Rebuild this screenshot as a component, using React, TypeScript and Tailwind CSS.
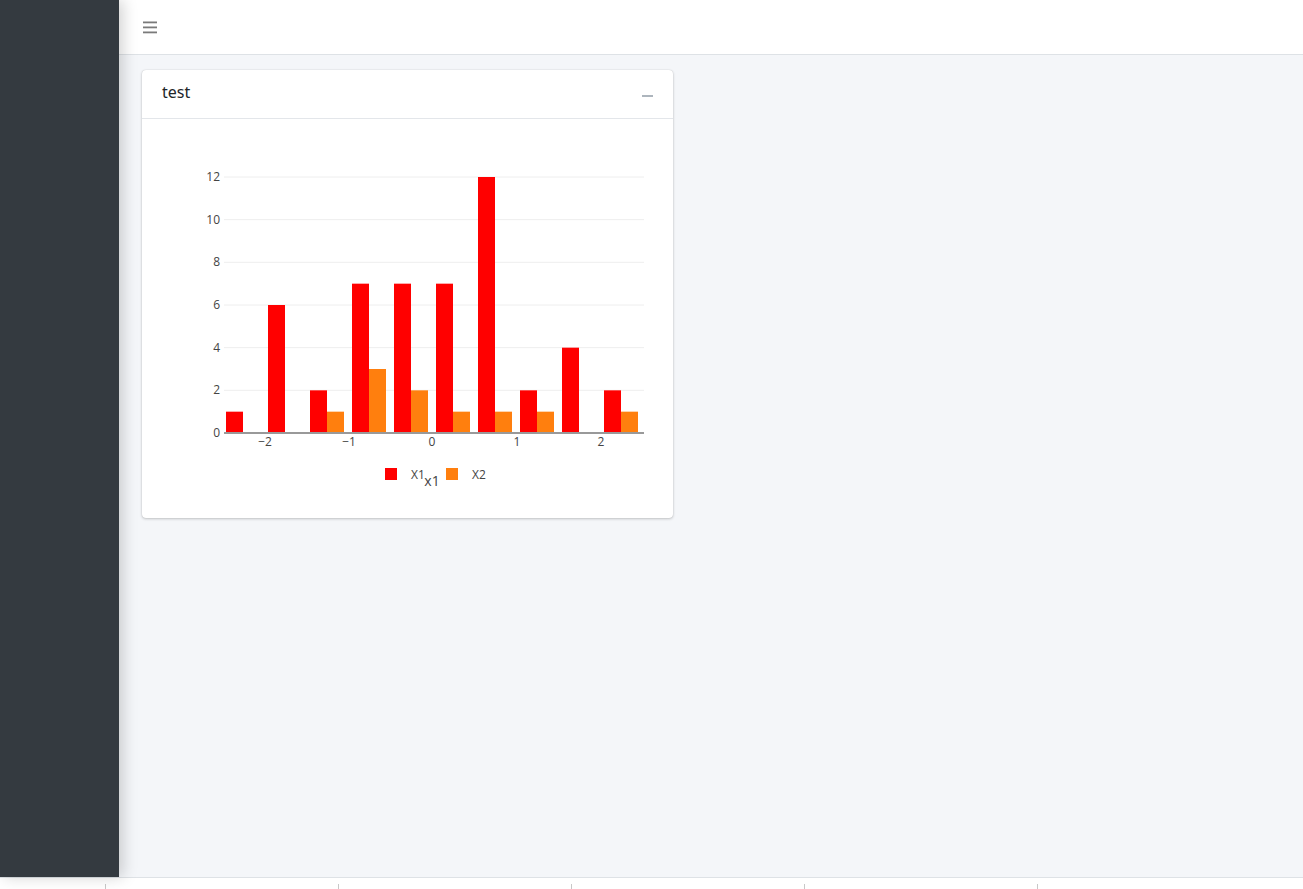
import React from 'react';

// histogram counts per bin (bins of 0.5 from -2.5 to 2.5)
const x1Counts = [1, 6, 2, 7, 7, 7, 12, 2, 4, 2];
const x2Counts = [0, 0, 1, 3, 2, 1, 1, 1, 0, 1];

const PLOT_LEFT = 224;
const PLOT_RIGHT = 644;
const ZERO_Y = 433;
const UNIT_Y = (433 - 177) / 12;
const BIN_W = (PLOT_RIGHT - PLOT_LEFT) / 10;

const Chart = () => {
  // chart svg is positioned in card-local coords; offset from page
  const ox = 142;
  const oy = 119;
  const yTicks = [0, 2, 4, 6, 8, 10, 12];
  const xTicks = [
    { label: '−2', x: 265 },
    { label: '−1', x: 349 },
    { label: '0', x: 432 },
    { label: '1', x: 517 },
    { label: '2', x: 601 },
  ];

  return (
    <svg width={530} height={399} viewBox={`${ox} ${oy} 530 399`} className="block" style={{ fontFamily: '"Open Sans", "DejaVu Sans", sans-serif' }}>
      {yTicks.map((t) =>
        t === 0 ? null : (
          <line key={t} x1={PLOT_LEFT} x2={PLOT_RIGHT} y1={ZERO_Y - t * UNIT_Y} y2={ZERO_Y - t * UNIT_Y} stroke="#eeeeee" strokeWidth={1} />
        )
      )}
      {x1Counts.map((c, i) => {
        const x = PLOT_LEFT + i * BIN_W + 2;
        return c > 0 ? <rect key={'a' + i} x={x} y={ZERO_Y - c * UNIT_Y} width={17} height={c * UNIT_Y} fill="#ff0000" /> : null;
      })}
      {x2Counts.map((c, i) => {
        const x = PLOT_LEFT + i * BIN_W + 19;
        return c > 0 ? <rect key={'b' + i} x={x} y={ZERO_Y - c * UNIT_Y} width={17} height={c * UNIT_Y} fill="#ff7f0e" /> : null;
      })}
      <line x1={PLOT_LEFT} x2={PLOT_RIGHT} y1={ZERO_Y} y2={ZERO_Y} stroke="#999999" strokeWidth={2} />
      {yTicks.map((t) => (
        <text key={'y' + t} x={220} y={ZERO_Y - t * UNIT_Y + 4} textAnchor="end" fontSize={12} fill="#444444">
          {t}
        </text>
      ))}
      {xTicks.map((t) => (
        <text key={'x' + t.label} x={t.x} y={446} textAnchor="middle" fontSize={12} fill="#444444">
          {t.label}
        </text>
      ))}
      {/* legend */}
      <rect x={385} y={468} width={12} height={12} fill="#ff0000" />
      <text x={411} y={479} fontSize={12} fill="#444444">X1</text>
      <rect x={446} y={468} width={12} height={12} fill="#ff7f0e" />
      <text x={472} y={479} fontSize={12} fill="#444444">X2</text>
      {/* axis title */}
      <text x={432} y={486} textAnchor="middle" fontSize={14} fill="#444444">x1</text>
    </svg>
  );
};

const App = () => {
  return (
    <div className="w-[1303px] h-[889px] flex flex-col bg-white overflow-hidden" style={{ fontFamily: '"Noto Sans", "Open Sans", sans-serif' }}>
      <div className="flex h-[878px] border-b border-[#dee2e6]">
        {/* Sidebar */}
        <aside className="w-[119px] shrink-0 bg-[#343a40] shadow-[4px_0_14px_rgba(0,0,0,0.18)] z-10" />

        <div className="flex-1 flex flex-col bg-[#f4f6f9]">
          {/* Navbar */}
          <nav className="h-[55px] shrink-0 bg-white border-b border-[#dee2e6] flex items-center pl-[24px]">
            <svg width="15" height="13" viewBox="0 0 15 13">
              <rect x="0" y="0.5" width="14" height="1.8" fill="#7a7a7a" />
              <rect x="0" y="5.5" width="14" height="1.8" fill="#7a7a7a" />
              <rect x="0" y="10.5" width="14" height="1.8" fill="#7a7a7a" />
            </svg>
          </nav>

          {/* Content */}
          <div className="pt-[15px] pl-[23px]">
            <div className="w-[531px] bg-white rounded-[4px] shadow-[0_0_1px_rgba(0,0,0,0.2),0_1px_3px_rgba(0,0,0,0.2)]">
              <div className="h-[49px] flex items-center justify-between px-[20px] border-b border-[#e3e6ea]">
                <span className="text-[16px] text-[#212529] -mt-[4px]">test</span>
                <span className="block w-[11px] h-[2px] bg-[#adb5bd] mt-[3px]" />
              </div>
              <Chart />
            </div>
          </div>
        </div>
      </div>

      {/* bottom strip with ticks */}
      <div className="flex-1 flex items-end pl-[105px] gap-[232px]">
        <span className="block w-px h-[5px] bg-[#c8c8c8]" />
        <span className="block w-px h-[5px] bg-[#c8c8c8]" />
        <span className="block w-px h-[5px] bg-[#c8c8c8]" />
        <span className="block w-px h-[5px] bg-[#c8c8c8]" />
        <span className="block w-px h-[5px] bg-[#c8c8c8]" />
      </div>
    </div>
  );
};

export default App;
